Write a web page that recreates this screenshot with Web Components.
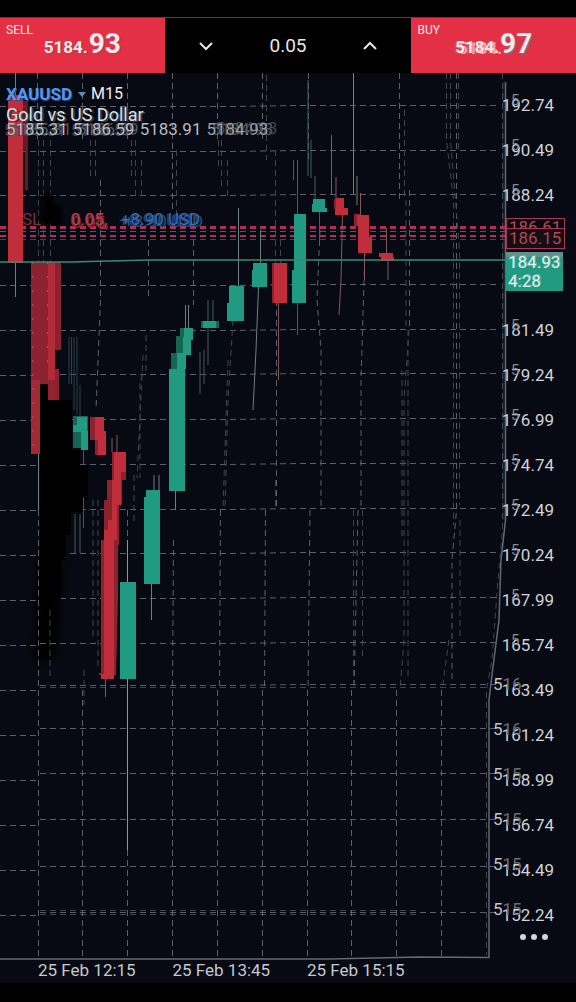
<!DOCTYPE html>
<html lang="en">
<head>
<meta charset="utf-8">
<meta name="viewport" content="width=device-width">
<title>XAUUSD M15</title>
<style>
html,body{margin:0;background:#000}
body{font-family:Roboto,"Liberation Sans",sans-serif;color:#d9dbe0}
</style>
</head>
<body>
<trading-app></trading-app>
<script>
const define=(name,html,setup)=>{
  const t=document.createElement('template');
  t.innerHTML=html;
  customElements.define(name,class extends HTMLElement{
    constructor(){super();this.attachShadow({mode:'open'}).append(t.content.cloneNode(true));}
    connectedCallback(){if(setup)setup(this.shadowRoot,this);}
  });
};

/* One-tap trade button: side, main digits, pip digits */
define('price-button',`<style>
:host{display:block}
button{all:unset;box-sizing:border-box;display:block;position:relative;width:100%;height:100%;background:#e33045;color:#fbe9eb;cursor:pointer}
.side{position:absolute;left:6px;top:4px;font-size:12px;line-height:16px}
.price{display:flex;justify-content:center;align-items:baseline;line-height:52px;font-weight:700;font-size:17px;text-shadow:1px 1px 0 #a94452}
.pips{font-size:28px;margin-left:1px}
:host([ghost]) .main{text-shadow:3px 1px 0 #f0a0a8,-2px 1px 0 #c94f60}
:host([ghost]) .pips{text-shadow:2px 2px 0 #a05a66}
</style><button type="button"><span class="side"><slot name="side"></slot></span><span class="price"><span class="main"><slot></slot></span><span class="pips"><slot name="pips"></slot></span></span></button>`);

define('volume-stepper',`<style>
:host{display:grid;grid-template-columns:1fr 1fr 1fr;align-items:center;background:#000}
button{all:unset;display:grid;place-items:center;height:52px;cursor:pointer}
input{all:unset;min-width:0;width:100%;text-align:center;font-size:19px;line-height:24px;color:#e6e6e8}
svg{width:16px;height:10px;fill:none;stroke:#e8e8ea;stroke-width:2}
</style>
<button type="button" aria-label="Decrease volume"><svg viewBox="0 0 16 10"><path d="M2 2L8 8l6-6"/></svg></button>
<input type="text" value="0.05" aria-label="Volume">
<button type="button" aria-label="Increase volume"><svg viewBox="0 0 16 10"><path d="M2 8L8 2l6 6"/></svg></button>`);

define('trade-bar',`<style>
:host{display:grid;grid-template-columns:2fr 3fr 2fr;height:54px;border-top:1px solid #474950;border-bottom:1px solid #474950}
</style>
<price-button><span slot="side">SELL</span>5184.<span slot="pips">93</span></price-button>
<volume-stepper></volume-stepper>
<price-button ghost><span slot="side">BUY</span>5184.<span slot="pips">97</span></price-button>`);

/* Candles, grid and level lines */
define('candle-canvas',`<style>
:host{display:block}
svg{display:block;width:100%;height:100%}
.grid{stroke:#697078;stroke-width:1;stroke-dasharray:6 4;fill:none;opacity:.85}
.dim{stroke:#3f454e;stroke-width:1;stroke-dasharray:6 4;fill:none}
.axis{stroke:#646873;stroke-width:1.500;fill:none}
.up{fill:#209a80}.down{fill:#c02d3b}.shade{fill:#8c2230}.upshade{fill:#166553}
.wick{stroke:#6b7f7f;fill:none}.rwick{stroke:#84585b;fill:none}.level{stroke:#b02f55;stroke-dasharray:6 4}
</style>
<svg viewBox="0 73 576 910" preserveAspectRatio="none" role="img" aria-label="XAUUSD candlestick chart">
<defs>
<filter id="soft"><feGaussianBlur stdDeviation="2"/></filter>
<filter id="haze" x="-50%" width="200%"><feGaussianBlur stdDeviation="5"/></filter>
</defs>
<path d="M38 560h24l-2 50-6 50H34z" fill="#000" filter="url(#haze)"/>
<g id="grid"></g>
<path d="M40 385h12v15h20v50h8v15h8v35h-4v12h-13v23h-5v25h-5v40h-8v8H40z" fill="#000"/>
<path d="M42 193h12v12h8v20H40z" fill="#000" filter="url(#soft)"/>
<path class="axis" d="M505.500 82V520L501 560 499 620 492 675 489 700V957.500L420 957 330 959H0"/>
<path d="M504 82V520" stroke="#30343d"/>
<path class="dim" d="M502.500 73V530L498 580 492 660 486.500 690V955"/>
<g class="level"><path d="M0 227.500H505" stroke-width="3"/><path d="M0 231.500H505"/><path d="M0 236H505" stroke-width="2"/><path d="M0 239.500H505" stroke="#743041"/></g>
<g class="wick">
<path d="M15.500 73V95M15.500 262V297M38.500 454V510"/>
<path d="M69 337V384M71.500 337V384M74 337V410M77 337V415M80 385V416" stroke="#29424a"/>
<path d="M83.500 450V464M83.500 497V528M75 514V553M80 514V553" stroke="#3d5a60"/>
<path d="M127.500 540V582M127.500 679V850" stroke="#87979a"/>
<path d="M151.500 584V620M175.500 491V510M185.500 305V328M188.500 305V328M154 475V490M159 475V490"/>
<path d="M208 300V321M213 300V321M208 328V365M204 350V384M200 352V394" stroke="#3d5a60"/>
<path d="M238.500 208V286M260.500 230V263M258.500 287L256 350 253 410"/>
<path d="M293.500 160V180M297.500 160V214M297.500 303V335M308 80V176M311 140V178M315 176V199M319.500 212V240" stroke="#435f66"/>
<path d="M353.500 73V194M357 176V205" stroke="#817b73"/>
</g>
<g class="rwick"><path d="M105.500 679V697M112 438V452M117 435V452M278.500 303V380M331.500 135V194M336 177V199M342.500 215L341 280 339 315M360.500 193V215M364.500 253V280M386.500 228V253M388 261V280"/></g>
<path class="down" d="M8 95H23V263H8z"/><path class="shade" d="M23 101H28V190H25V150H23z" opacity=".7"/>
<path class="shade" d="M31 262H61V350H55V380H31z"/><path d="M31 380H40V454H31z" fill="#a22936"/>
<path class="down" d="M48 262H55V400H48z" opacity=".75"/><path d="M33 262V450M47.500 262V380" stroke="#97606a" stroke-dasharray="2 12"/><path class="shade" d="M55 369H59V400H55z"/>
<path class="shade" d="M40 369H48V384H40z"/>
<path class="upshade" d="M73 416H88V450H81V448H73z"/><path class="up" d="M77 417H87V431H88V450H81V432H73V425H77z"/>
<path class="shade" d="M90 417H97V433H106V455H95V440H90z"/><path class="down" d="M95 417H104V431H106V455H98V440H95z"/>
<path class="shade" d="M112 452H126V480H122V505H119V545H118V600L116 675H99V673H101V540H104V500H107V480H112z"/>
<path class="down" d="M114 452H126V472H121V505H117V540H114V679H101V674H104V530H108V520H112V480H114z"/>
<path class="up" d="M120 582H136V679H120zM146 490H160V584H144V497H146zM183 328H193V340H191V355H186V369H185V491H169V369H174V353H177V337H183z"/>
<path class="upshade" d="M171 353H177V369H171zM176 336H183V353H176zM201 321H219V328H201zM180 328H184V337H180z"/>
<path class="up" d="M203 321H216V328H203zM229 286H244V321H227V303H229zM253 263H267V287H252V270H253zM294 214H306V303H292V270H294zM313 199H325V208H327V212H312V204H313z"/>
<path class="shade" d="M272 263H275V303H272zM334 199H344V209H334zM354 214H360V226H354z"/>
<path class="down" d="M274 263H287V303H274zM336 198H344V208H348V215H335V209H336zM357 215H369V237H372V253H358V226H357zM379 253H393V257H394V261H381V257H379z"/>
<path d="M0 262H70L150 260H505" stroke="#3c8973" stroke-width="1.500" fill="none"/>
</svg>`,root=>{
  const h=[106,151,195,285,330,374,419,464,509,553,598,643,685,728,773,819,866,912];
  const left=[106,151,195,285,330,375,420,465,510,555,600,645,690,735,780,825,870,915];
  let s='';
  h.forEach((y,i)=>{
    const skew=i<13?-1:0;
    s+=`<path class="grid" d="M0 ${left[i]+.5}H36"/><path class="grid" d="M40 ${y+.5}H230L300 ${y+.5+skew}H500"/>`;
  });
  s+='<path class="dim" d="M40 687.500H490M40 914.500H420M40 910.500H420"/>';
  const lower=[38,82,127,172,217,262,307,351,396,441];
  lower.forEach((x,i)=>{s+=`<path class="grid" d="M${x+.5} ${i===0?510:690}V957"/>`;});
  [[172,540],[219,510],[264,510]].forEach(([x,y])=>{s+=`<path class="grid" d="M${x+1.5} ${y}L${x+.5} 690"/>`;});
  [[37,73,140],[82,73,140],[127,73,140],[172,73,210],[217,73,140],[262,73,140],[308,73,160],[353,73,160],[399,73,200]].forEach(([x,a,b])=>{s+=`<path class="grid" d="M${x+.5} ${a}V${b}"/>`;});
  ['M100.500 180V300L96 410','M148.500 240V300','M193.500 240V305','M276.500 300V510','M320 230L317 300 321 350V510','M365 250L361 380V510','M409.500 190V330','M456.500 73V510L452 560V680','M127.500 510V582','M310 510L308 690','M358 510L354 690'].forEach(d=>{s+=`<path class="grid" d="${d}"/>`;});
  ['M38.500 140V262','M43.500 140V262','M50.500 140V262','M90.500 140V180','M95.500 140V180','M131.500 140V180','M135.500 140V200','M141.500 160V200','M176.500 150V220','M218.500 140V170','M221.500 130V190','M227.500 160V200','M266.500 75V160','M275.500 150V300','M280.500 240V300','M275.500 480V510','M146 335V370L140 380V478','M143 355L137 478','M134 475V525','M98 500V670','M93 500V640','M50 610V680','M84 670V705','M233 320L228 400 225 510','M228 360L223 510','M409 330L404 400V640L400 690','M402 370V540','M408 330V680','M446.500 73V140L453.500 200V525','M450.500 73V140L459.500 250V505','M458.500 73V150','M404.500 110V200','M406 200V330','M353.500 510V685','M362.500 510V660','M449 640L442 690','M460 520V640'].forEach(d=>{s+=`<path class="dim" d="${d}"/>`;});
  root.getElementById('grid').innerHTML=s;
});

define('chart-heading',`<style>
:host{display:block;padding:10px 0 0 6px;font-size:17px;white-space:nowrap}
.row{display:flex;align-items:center;line-height:22px;gap:5px}
a{color:#5894e9;font-weight:700;text-decoration:none;text-shadow:1px 1px 0 #1d4c91;display:flex;align-items:center;gap:6px}
i{border:4px solid transparent;border-top:5px solid #5a8bc2;border-bottom:0}
.m{font-size:16px;color:#f0f0f2}
.name{color:#dfe0e4;line-height:20px;margin:0;font-weight:400;font-size:18px;text-shadow:2px 1px 0 #353a43}
.ohlc{display:flex;gap:5px;line-height:8px;color:#b9bcc3}
.g{text-shadow:4px 0 0 #555a63,-2px 1px 0 #42464e}
.far{color:#9a9ea7;text-shadow:5px 0 0 #555a63,9px -1px 0 #42464e}
</style>
<div class="row"><a href="#symbol">XAUUSD<i></i></a><span class="m">M15</span></div>
<h1 class="name">Gold vs US Dollar</h1>
<div class="ohlc"><span class="g">5185.31</span><span class="g">5186.59</span><span>5183.91</span><span class="far">5184.93</span></div>`);

define('position-note',`<style>
:host{display:flex;font-size:17px;line-height:24px;white-space:nowrap;padding-left:22px}
.side{color:#76303a;width:49px}
.lot{color:#c53b48;width:50px;text-shadow:1px 3px 0 #84303a,-1px 1px 0 #7b2933}
.pl{color:#386fb6;text-shadow:3px 2px 0 #254e85,-2px 1px 0 #1e467e}
</style><span class="side">SL</span><span class="lot">0.05,</span><span class="pl">+8.90 USD</span>`);

define('axis-price',`<style>
:host{display:block;position:relative;height:45px;line-height:45px;text-align:right;padding-right:22px;font-size:17px;color:#d0d2d7}
.echo{position:absolute;left:22px;top:-5px;color:#858a93;font-size:15px}
:host([low]) .echo{left:4px;top:-6px;color:#c3c5cb;font-size:17px}
.echo span{color:#696e77}
</style><span class="echo"></span><slot></slot>`,(root,el)=>{
  const lead=el.textContent.slice(0,2);
  root.querySelector('.echo').innerHTML=el.hasAttribute('low')?`5<span>${lead}</span>`:'5';
});

define('price-axis',`<style>
:host{display:block;position:relative;box-sizing:border-box;height:885px;padding-top:10px}
.gap{height:90px}
.tag{position:absolute;left:17px;box-sizing:border-box;font-size:17px;padding-left:2px}
.order{width:59px;border:1px solid #a93653;color:#b04a50;height:21px;line-height:17px;top:145px}
.order.b{line-height:19px;top:155px;background:#160e17}
.last{top:179px;width:57px;height:39px;background:linear-gradient(#62908a 5px,#209a80 5px);color:#e4efed;line-height:19px;padding-top:1px;text-shadow:1px -1px 0 #69b5a4}
button{all:unset;display:flex;gap:5px;margin:-10px 0 0 31px;height:18px;align-items:center;cursor:pointer}
button i{width:6px;height:6px;border-radius:3px;background:#d5d6db}
</style>
<div id="top"></div><div class="gap"></div><div id="rest"></div>
<div class="tag order">186.61</div><div class="tag order b">186.15</div>
<div class="tag last"><div>184.93</div><div>4:28</div></div>
<button type="button" aria-label="More"><i></i><i></i><i></i></button>`,root=>{
  const row=(v,low)=>`<axis-price${low?' low':''}>${v}</axis-price>`;
  root.getElementById('top').innerHTML=['192.74','190.49','188.24'].map(v=>row(v)).join('');
  root.getElementById('rest').innerHTML=['181.49','179.24','176.99','174.74','172.49','170.24','167.99','165.74'].map(v=>row(v)).join('')
    +['163.49','161.24','158.99','156.74','154.49','152.24'].map(v=>row(v,true)).join('');
});

define('time-axis',`<style>
:host{display:grid;grid-template-columns:repeat(4,1fr);padding-left:38px;font-size:17px;line-height:24px;color:#c6c8ce;white-space:nowrap}
</style><time>25 Feb 12:15</time><time>25 Feb 13:45</time><time>25 Feb 15:15</time>`);

define('price-chart',`<style>
:host{display:grid;position:relative;grid-template-columns:1fr 87px;grid-template-rows:auto 25px;background:#070a12}
candle-canvas{position:absolute;inset:0}
.plot,price-axis,time-axis{position:relative}
time-axis{grid-column:1/3}
position-note{padding-top:74px}
</style>
<candle-canvas></candle-canvas>
<div class="plot"><chart-heading></chart-heading><position-note></position-note></div>
<price-axis></price-axis>
<time-axis></time-axis>`);

define('trading-app',`<style>
:host{display:block;min-height:100vh;box-sizing:border-box;padding:17px 0 19px}
</style><trade-bar></trade-bar><price-chart></price-chart>`);
</script>
</body>
</html>
